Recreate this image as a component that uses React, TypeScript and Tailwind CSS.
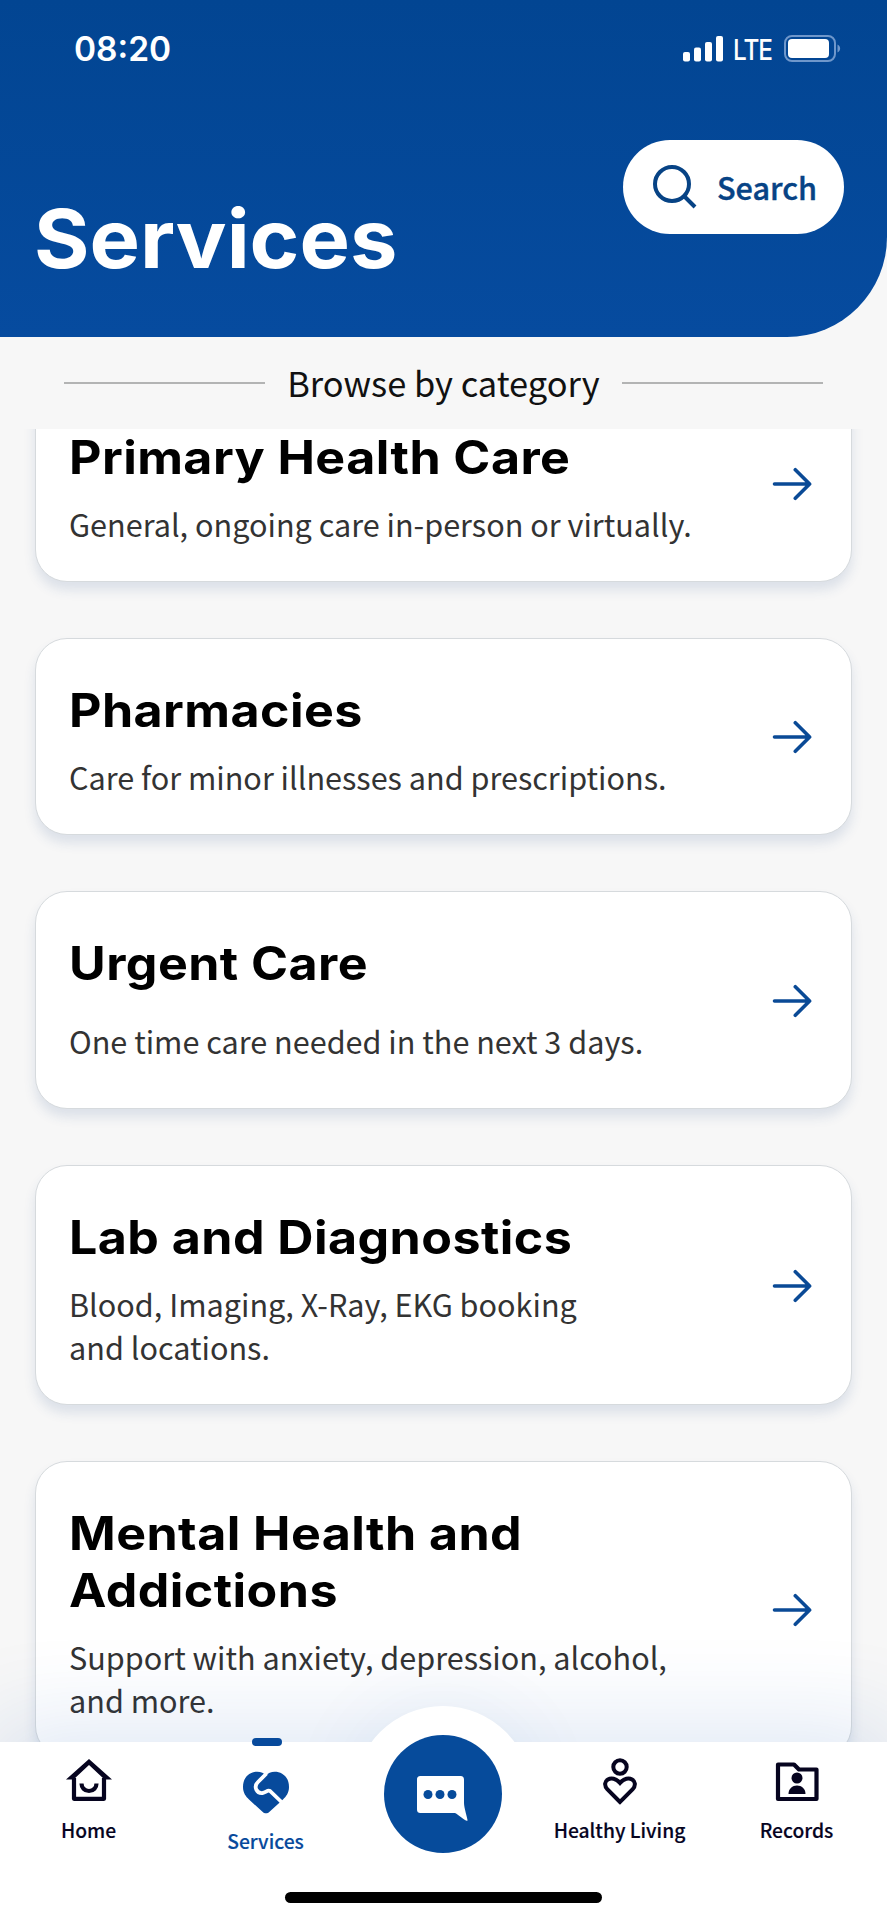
import type { ReactNode } from "react";

type Service = { title: string[]; text: string[]; spaced?: boolean };

const services: Service[] = [
  { title: ["Primary Health Care"], text: ["General, ongoing care in-person or virtually."] },
  { title: ["Pharmacies"], text: ["Care for minor illnesses and prescriptions."] },
  { title: ["Urgent Care"], text: ["One time care needed in the next 3 days."], spaced: true },
  { title: ["Lab and Diagnostics"], text: ["Blood, Imaging, X-Ray, EKG booking", "and locations."] },
  { title: ["Mental Health and", "Addictions"], text: ["Support with anxiety, depression, alcohol,", "and more."] },
];

function StatusBar() {
  return (
    <div className="flex h-[49px] items-center justify-between pl-[74px] pr-[46px] font-['Inter',sans-serif] text-white">
      <span className="pt-[2px] text-[33.5px] font-semibold leading-none">08:20</span>
      <div className="flex items-center">
        <svg width="40" height="26" viewBox="0 0 40 26" fill="white">
          <rect x="0" y="16" width="7" height="9.5" rx="2" />
          <rect x="11" y="11.5" width="7" height="14" rx="2" />
          <rect x="22" y="6" width="7" height="19.5" rx="2" />
          <rect x="33" y="0" width="7" height="25.5" rx="2" />
        </svg>
        <span className="ml-[10px] w-[41px] origin-left scale-x-[0.87] pt-[2px] text-[28px] font-medium leading-none tracking-[-1.2px]">LTE</span>
        <svg className="ml-[10px]" width="57" height="27" viewBox="0 0 57 27" fill="none">
          <rect x="1" y="1" width="50" height="25" rx="7" stroke="#6f97cb" strokeWidth="2" />
          <rect x="4" y="4" width="41" height="19" rx="4" fill="white" />
          <path d="M53.5 9.5C57 11 57 16 53.5 17.5Z" fill="#6f97cb" />
        </svg>
      </div>
    </div>
  );
}

function Header() {
  return (
    <header className="h-[337px] shrink-0 rounded-br-[100px] bg-linear-to-b from-[#024592] to-[#064b9f] pt-6">
      <StatusBar />
      <div className="flex justify-between pl-[34px] pr-[43px] pt-[67px]">
        <h1 className="origin-left scale-x-[1.04] pt-[51px] font-['Inter',sans-serif] text-[81.5px] font-bold leading-[96px] text-white">Services</h1>
        <button className="flex h-[94px] w-[221px] items-center rounded-full bg-white pl-[30px] text-[#074385]">
          <svg width="44" height="44" viewBox="0 0 44 44" fill="none" stroke="currentColor" strokeWidth="4">
            <circle cx="19" cy="19" r="17" />
            <path d="M31 31l11 11" />
          </svg>
          <span className="ml-5 pt-px text-[30.6px] font-medium [-webkit-text-stroke:0.4px_currentColor]">Search</span>
        </button>
      </div>
    </header>
  );
}

function ServiceCard({ title, text, spaced }: Service) {
  return (
    <article className="flex shrink-0 items-center justify-between rounded-[32px] border border-[#d6dadd] bg-white pb-[35px] pl-[33px] pr-[39px] pt-[43px] shadow-[0_8px_12px_rgba(40,80,140,0.13)]">
      <div className={spaced ? "pb-[10px]" : ""}>
        <h2 className="origin-left scale-x-[1.09] font-['Inter',sans-serif] text-[46px] font-bold leading-[57px] tracking-[0.4px] text-black">
          {title.map((line) => (
            <span key={line} className="block whitespace-nowrap">{line}</span>
          ))}
        </h2>
        <p className={spaced ? "pt-7 text-[30.6px] leading-[43px] text-[#333]" : "pt-[17px] text-[30.6px] leading-[43px] text-[#333]"}>
          {text.map((line) => (
            <span key={line} className="block whitespace-nowrap">{line}</span>
          ))}
        </p>
      </div>
      <svg className="-mt-[7px] shrink-0" width="40" height="34" viewBox="0 0 40 34" fill="none" stroke="#0a4a96" strokeWidth="3.600" strokeLinecap="round" strokeLinejoin="round">
        <path d="M2.500 17h35M23.300 2.700L37.600 17 23.300 31.300" />
      </svg>
    </article>
  );
}

function NavItem({ label, active, children }: { label: string; active?: boolean; children: ReactNode }) {
  return (
    <a className={active ? "flex w-1/5 flex-col items-center pt-[27px] text-[#074a9c]" : "flex w-1/5 flex-col items-center pt-4 text-[#06041f]"}>
      {children}
      <span className="mt-[10px] whitespace-nowrap text-[19.3px] font-medium leading-7 [-webkit-text-stroke:0.15px_currentColor]">{label}</span>
    </a>
  );
}

function BottomNav() {
  return (
    <nav className="relative isolate h-[178px] shrink-0 shadow-[0_-10px_90px_10px_rgba(20,85,175,0.13)]">
      <div className="absolute left-[354px] top-[-36px] -z-10 size-[178px] rounded-full bg-white shadow-[0_0_80px_rgba(20,85,175,0.07)]" />
      <div className="flex h-full flex-col bg-white">
        <div className="flex h-[150px] pr-[2px]">
          <NavItem label="Home">
            <svg width="48" height="48" viewBox="0 0 48 48" fill="none" stroke="currentColor" strokeWidth="4.200">
              <path d="M9 20v20.800h30V20" strokeLinejoin="round" />
              <path d="M24 1L47 21.500h-7.500L24 7 8.500 21.500H1L24 1z" fill="currentColor" stroke="none" />
              <path d="M16.500 25.500c0 4 3 7.500 7.500 7.500s7.500-3.500 7.500-7.500" />
            </svg>
          </NavItem>
          <NavItem label="Services" active>
            <svg width="48" height="48" viewBox="0 0 48 48">
              <path d="M24 6.500C19-.5 1 1.500 1 18c0 6 3 9.500 6 12.500l13.500 12.300c2 2 5 2 7 0L41 30.500c3-3 6-6.500 6-12.500C47 1.500 29-.5 24 6.500z" fill="currentColor" />
              <path d="M24.500 4.500L16 13c-5 5-1 11.500 4.500 11 3.500-.5 5-3.500 7.500-2L39.500 33" fill="none" stroke="white" strokeWidth="3.800" />
            </svg>
          </NavItem>
          <div className="w-1/5" />
          <NavItem label="Healthy Living">
            <svg width="48" height="48" viewBox="0 0 48 48" fill="none" stroke="currentColor" strokeWidth="4">
              <circle cx="24" cy="9" r="6.700" />
              <path d="M24 44L11.500 31.500C4 23 16 15.500 24 25c8-9.500 20-2 12.500 6.500L24 44z" />
            </svg>
          </NavItem>
          <NavItem label="Records">
            <svg width="48" height="48" viewBox="0 0 48 48" fill="none" stroke="currentColor" strokeWidth="4.200" strokeLinejoin="round">
              <path d="M5 6.500h16l5 5h17.500v29.500H5z" />
              <circle cx="24" cy="20" r="5.500" fill="currentColor" stroke="none" />
              <path d="M15.500 36c0-5.500 4-8.500 8.500-8.500s8.500 3 8.500 8.500z" fill="currentColor" stroke="none" />
            </svg>
          </NavItem>
        </div>
        <div className="mx-auto h-[11px] w-[317px] rounded-full bg-black" />
      </div>
      <div className="absolute left-[252px] top-[-4px] h-2 w-[30px] rounded-full bg-[#074a9c]" />
      <button className="absolute left-[384px] top-[-7px] flex size-[118px] items-center justify-center rounded-full bg-[#064b9b]">
        <svg width="118" height="118" viewBox="0 0 118 118">
          <path d="M37 41h39c3 0 4 1 4 4v23c0 5 4 17 3.500 17.500C82 87 75 80 71 78H37c-3 0-4-1-4-4V45c0-3 1-4 4-4z" fill="white" />
          <g fill="#064b9b">
            <circle cx="44" cy="59.500" r="4.500" />
            <circle cx="56" cy="59.500" r="4.500" />
            <circle cx="68" cy="59.500" r="4.500" />
          </g>
        </svg>
      </button>
    </nav>
  );
}

export default function App() {
  return (
    <div className="flex h-[1920px] w-[887px] flex-col overflow-hidden bg-[#f7f7f7] font-['Noto_Sans_CJK_SC',sans-serif]">
      <Header />
      <div className="flex h-[92px] shrink-0 items-center justify-between px-16">
        <div className="h-[2px] w-[201px] bg-[#b3b4b4]" />
        <span className="text-[34.4px] text-[#111]">Browse by category</span>
        <div className="h-[2px] w-[201px] bg-[#b3b4b4]" />
      </div>
      <main className="min-h-0 flex-1 overflow-hidden px-[35px]">
        <div className="-mt-[44px] flex flex-col gap-[56px]">
          {services.map((service) => (
            <ServiceCard key={service.title[0]} {...service} />
          ))}
        </div>
      </main>
      <BottomNav />
    </div>
  );
}
